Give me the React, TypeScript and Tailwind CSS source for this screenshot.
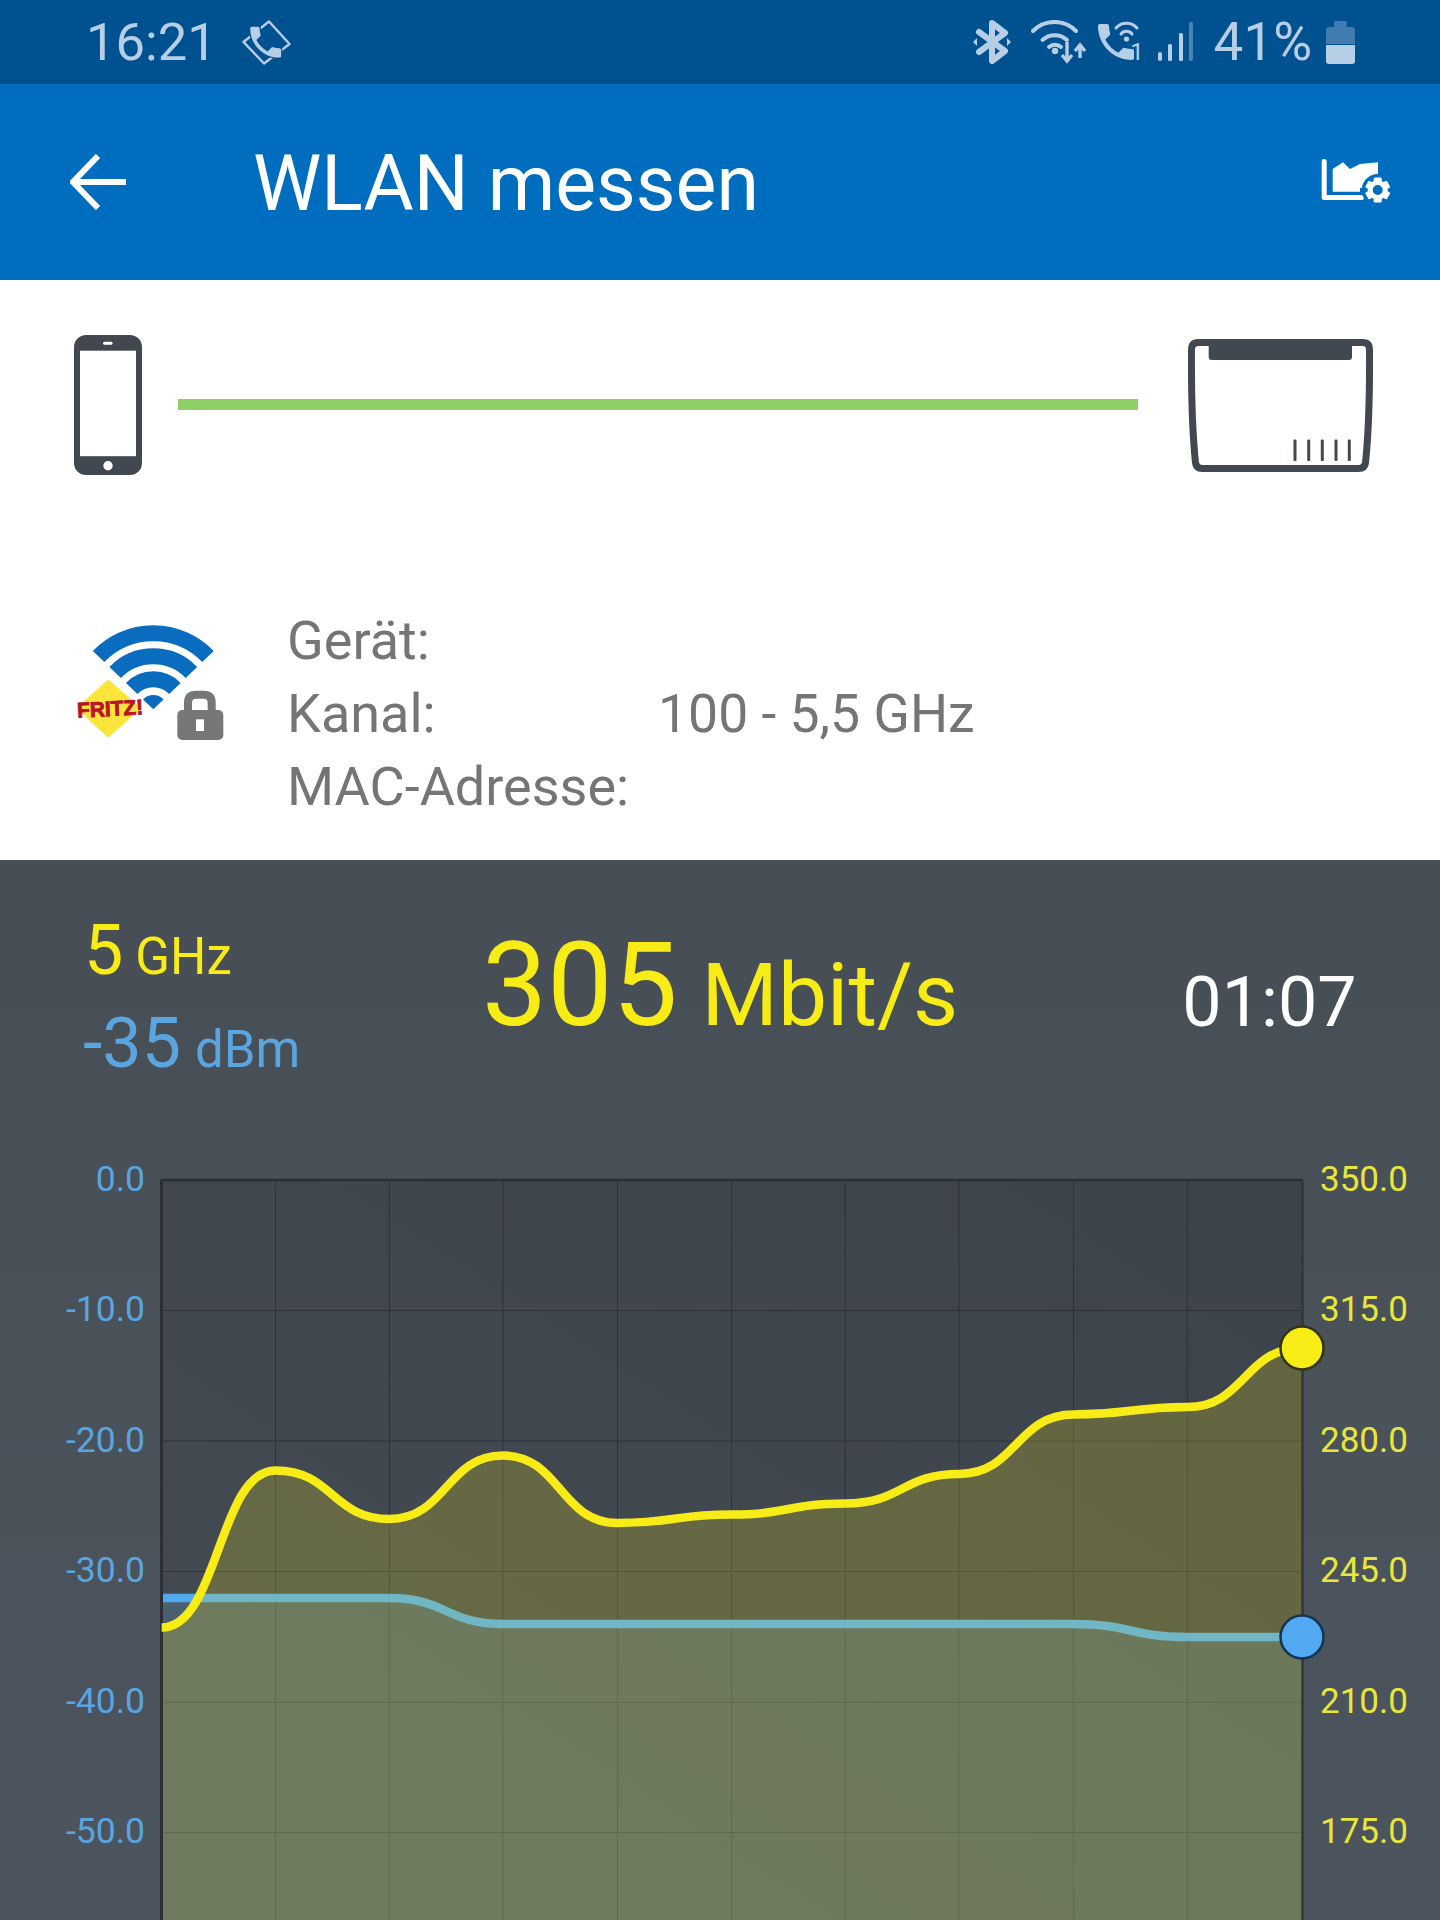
const ROBOTO = { fontFamily: '"Roboto", "Liberation Sans", sans-serif' };

const COLS = [161.6, 275.5, 389.4, 503, 617.5, 731.5, 845.3, 959, 1073.5, 1187.4, 1302];
const ROWS = [1180, 1310.5, 1441, 1571.5, 1702.5, 1832.5];
const YELLOW = [1627.5, 1470.5, 1519, 1455.5, 1523, 1514.5, 1503.5, 1474, 1414.5, 1407, 1348];
const BLUE = [1598, 1598, 1598, 1624, 1624, 1624, 1624, 1624, 1624, 1637, 1637];
const LEFT_LABELS = ['0.0', '-10.0', '-20.0', '-30.0', '-40.0', '-50.0'];
const RIGHT_LABELS = ['350.0', '315.0', '280.0', '245.0', '210.0', '175.0'];

function linePath(values: number[]) {
  let d = `M${COLS[0]} ${values[0]}`;
  for (let i = 1; i < COLS.length; i++) {
    const mid = (COLS[i - 1] + COLS[i]) / 2;
    d += ` C${mid} ${values[i - 1]} ${mid} ${values[i]} ${COLS[i]} ${values[i]}`;
  }
  return d;
}

const HANDSET =
  'M6.62 10.79c1.44 2.83 3.76 5.14 6.59 6.59l2.2-2.2c.27-.27.67-.36 1.02-.24 1.12.37 2.33.57 3.57.57.55 0 1 .45 1 1V20c0 .55-.45 1-1 1-9.39 0-17-7.61-17-17 0-.55.45-1 1-1h3.5c.55 0 1 .45 1 1 0 1.25.2 2.45.57 3.57.11.35.03.74-.25 1.02l-2.2 2.2z';

function CallCardIcon() {
  return (
    <svg width="49" height="45" viewBox="0 0 49 45" className="shrink-0">
      <path d="M27 1.5 L47.5 24 L22 43.5 L1.5 22 Z" fill="none" stroke="#b7cfe6" strokeWidth="2.4" strokeLinejoin="round" />
      <g transform="translate(3 1.5) scale(1.72)">
        <path d={HANDSET} fill="#b7cfe6" stroke="#00518f" strokeWidth="1.5" paintOrder="stroke" />
      </g>
    </svg>
  );
}

function BluetoothIcon() {
  return (
    <svg width="38" height="44" viewBox="0 0 38 44" fill="none" className="shrink-0">
      <path d="M6 12 L32 31 L19 41 V3 L32 13 L6 32" stroke="#b7cfe6" strokeWidth="6" strokeLinejoin="round" strokeLinecap="round" />
      <path d="M0 22 L4 18 V26 Z M38 22 L34 18 V26 Z" fill="#b7cfe6" />
    </svg>
  );
}

function WifiArrowsIcon() {
  return (
    <svg width="56" height="44" viewBox="0 0 56 44" fill="none" className="shrink-0">
      <g stroke="#b7cfe6" strokeWidth="4" strokeLinecap="round">
        <path d="M2 11 A30 30 0 0 1 45 11" />
        <path d="M11.5 20 A18 18 0 0 1 36 20" />
        <path d="M18 27 A9 9 0 0 1 30 27" />
      </g>
      <circle cx="24" cy="31" r="3.2" fill="#b7cfe6" />
      <path d="M36 22 V40 M31 35 L36 41 L41 35" stroke="#b7cfe6" strokeWidth="3.4" />
      <path d="M49 38 V26 M44 31 L49 25 L54 31" stroke="#b7cfe6" strokeWidth="3.4" />
    </svg>
  );
}

function CallWifiIcon() {
  return (
    <svg width="48" height="48" viewBox="0 0 48 48" className="shrink-0">
      <g transform="translate(-5 0) scale(2)">
        <path d={HANDSET} fill="#b7cfe6" />
      </g>
      <rect x="18" y="0" width="30" height="28" fill="#00518f" />
      <g fill="none" stroke="#b7cfe6" strokeWidth="3" strokeLinecap="round">
        <path d="M19 10 A14 14 0 0 1 40 10" />
        <path d="M24 16 A7 7 0 0 1 35 16" />
      </g>
      <circle cx="29.5" cy="21" r="2.6" fill="#b7cfe6" />
      <text x="40" y="42" fontSize="24" fill="#b7cfe6" textAnchor="middle" fontFamily="Roboto, sans-serif">1</text>
    </svg>
  );
}

function SignalIcon() {
  return (
    <svg width="36" height="40" viewBox="0 0 36 40" className="shrink-0">
      <rect x="0" y="30" width="4" height="9" rx="2" fill="#b7cfe6" />
      <rect x="10" y="22" width="4" height="17" rx="1.5" fill="#b7cfe6" />
      <rect x="21" y="11" width="4" height="28" rx="1.5" fill="#b7cfe6" />
      <rect x="31" y="0" width="4" height="39" rx="1.5" fill="#b7cfe6" opacity="0.4" />
    </svg>
  );
}

function BatteryIcon() {
  return (
    <svg width="29" height="43" viewBox="0 0 28 43" preserveAspectRatio="none" className="shrink-0">
      <path d="M9 0 H19 Q20 0 20 1 V6 H25 Q28 6 28 9 V23 H0 V9 Q0 6 3 6 H8 V1 Q8 0 9 0 Z" fill="#417cb0" />
      <path d="M0 24 H28 V40 Q28 43 25 43 H3 Q0 43 0 40 Z" fill="#b7cfe6" />
    </svg>
  );
}

function ChartSettingsIcon() {
  return (
    <svg width="72" height="48" viewBox="0 0 72 48" className="shrink-0">
      <path d="M1.7 3 Q1.7 1 4 1 Q6.7 1 6.7 3 V37 H42 Q44 37 44 39.5 Q44 42 42 42 H4 Q1.7 42 1.7 40 Z" fill="#fff" />
      <path d="M12.7 11 L23 4.3 L30 11 L40 6 L58 4.3 V30 H40 V33.7 H12.7 Z" fill="#fff" />
      <circle cx="57.7" cy="32" r="16" fill="#016dbf" />
      <g fill="#fff">
        {[0, 60, 120, 180, 240, 300].map((a) => (
          <rect key={a} x="53.7" y="19.5" width="8" height="7" rx="1.2" transform={`rotate(${a} 57.7 32)`} />
        ))}
      </g>
      <circle cx="57.7" cy="32" r="7.5" fill="none" stroke="#fff" strokeWidth="5" />
    </svg>
  );
}

function DevicePhone() {
  return (
    <svg width="68" height="140" viewBox="0 0 68 140" className="shrink-0">
      <rect x="0" y="0" width="68" height="140" rx="12" fill="#41484f" />
      <rect x="6" y="15.7" width="56" height="105.5" fill="#fff" />
      <rect x="29" y="6.7" width="9.5" height="3" rx="1.5" fill="#fff" />
      <circle cx="34" cy="130.7" r="4.7" fill="#fff" />
    </svg>
  );
}

function Router() {
  return (
    <svg width="185" height="133" viewBox="0 0 185 133" className="shrink-0">
      <path
        d="M10 3.5 H175 Q181.5 3.5 181.5 11 Q182 80 177.5 124 Q176.5 129.5 171 129.5 H14 Q8.5 129.5 7.5 124 Q3 80 3.5 11 Q3.5 3.5 10 3.5 Z"
        fill="none"
        stroke="#41484f"
        strokeWidth="7"
      />
      <path d="M20.7 0 H164 V18 Q164 21 161 21 H23.7 Q20.7 21 20.7 18 Z" fill="#41484f" />
      <g fill="#41484f">
        <rect x="105.5" y="100.5" width="3" height="21.5" rx="1" />
        <rect x="119.2" y="100.5" width="3" height="21.5" rx="1" />
        <rect x="132.8" y="100.5" width="3" height="21.5" rx="1" />
        <rect x="146.5" y="100.5" width="3" height="21.5" rx="1" />
        <rect x="159.8" y="100.5" width="3" height="21.5" rx="1" />
      </g>
    </svg>
  );
}

function FritzWifi() {
  return (
    <svg width="180" height="145" viewBox="0 0 180 145" className="shrink-0">
      <g fill="none" stroke="#0a6cbf" strokeWidth="16">
        <path d="M48.6 56.5 A76 76 0 0 1 158 56.5" />
        <path d="M65.2 72.5 A53 53 0 0 1 141.4 72.5" />
        <path d="M81.7 88.5 A30 30 0 0 1 124.9 88.5" />
      </g>
      <path d="M103.3 109.3 L93 99.4 A14.3 14.3 0 0 1 113.6 99.4 Z" fill="#0a6cbf" />
      <path d="M58.3 82 L88 108.3 L58.3 135 L29 108.3 Z" fill="#fbe53a" stroke="#fbe53a" strokeWidth="4" strokeLinejoin="round" />
      <text
        x="27"
        y="116"
        fontSize="21"
        fontWeight="900"
        fill="#b81426"
        stroke="#b81426"
        strokeWidth="0.9"
        textLength="66"
        lengthAdjust="spacingAndGlyphs"
        transform="rotate(-3 58 108)"
        fontFamily="'Liberation Sans', sans-serif"
      >
        FRITZ!
      </text>
      <path d="M138 112 V103 Q138 94.7 146 94.7 H153.7 Q161.7 94.7 161.7 103 V112" fill="none" stroke="#777" strokeWidth="8" />
      <rect x="127.3" y="110" width="46" height="30" rx="5" fill="#777" />
      <rect x="146" y="119.3" width="8" height="11.7" fill="#fff" />
    </svg>
  );
}

function Chart() {
  const yellow = linePath(YELLOW);
  const blue = linePath(BLUE);
  const closeArea = ` L${COLS[10]} 1921 L${COLS[0]} 1921 Z`;
  return (
    <svg width="1142" height="740" viewBox="161 1180 1142 740" className="mt-[65px] shrink-0 overflow-visible">
      <defs>
        <linearGradient id="plotBg" x1="0" y1="1" x2="1" y2="0">
          <stop offset="0" stopColor="#454c54" />
          <stop offset="1" stopColor="#3d434a" />
        </linearGradient>
      </defs>
      <rect x="161" y="1180" width="1142" height="741" fill="url(#plotBg)" />
      <g stroke="#2c3238" strokeWidth="1">
        {COLS.slice(1, 10).map((x) => (
          <line key={x} x1={x} y1="1180" x2={x} y2="1921" />
        ))}
        {ROWS.slice(1).map((y) => (
          <line key={y} x1="161" y1={y} x2="1303" y2={y} />
        ))}
      </g>
      <path d={blue + closeArea} fill="#6cb0dc" fillOpacity="0.21" />
      <path d={blue} fill="none" stroke="#4fa9ef" strokeWidth="8.5" />
      <path d={yellow + closeArea} fill="#f8ec17" fillOpacity="0.2" />
      <line x1="161.5" y1="1180" x2="161.5" y2="1921" stroke="#2b3036" strokeWidth="3" />
      <line x1="161" y1="1180" x2="1303" y2="1180" stroke="#2b3036" strokeWidth="2.5" />
      <line x1="1302.5" y1="1180" x2="1302.5" y2="1921" stroke="#31373d" strokeWidth="2.5" />
      <path d={yellow} fill="none" stroke="#f8ec17" strokeWidth="8.5" />
      <circle cx="1302" cy="1348" r="21.5" fill="#f8ec17" stroke="#33330f" strokeWidth="2.5" />
      <circle cx="1302" cy="1637" r="21.5" fill="#52a9f2" stroke="#153452" strokeWidth="2.5" />
    </svg>
  );
}

export default function App() {
  return (
    <div className="flex h-[1920px] w-[1440px] flex-col overflow-hidden bg-white" style={ROBOTO}>
      <div className="flex h-[84px] shrink-0 items-center justify-between bg-[#00518f] pl-[86px] pr-[85px] text-[#b7cfe6]">
        <div className="flex items-center gap-[25px]">
          <span className="text-[52.5px] font-normal leading-none">16:21</span>
          <CallCardIcon />
        </div>
        <div className="flex items-center">
          <BluetoothIcon />
          <div className="ml-[20px]"><WifiArrowsIcon /></div>
          <div className="ml-[10px]"><CallWifiIcon /></div>
          <div className="ml-[13px]"><SignalIcon /></div>
          <span className="ml-[20px] text-[53px] font-normal leading-none">41%</span>
          <div className="ml-[14px]"><BatteryIcon /></div>
        </div>
      </div>

      <div className="flex h-[196px] shrink-0 items-center justify-between bg-[#016dbf] pl-[70px] pr-[48px]">
        <div className="flex items-center">
          <svg width="56" height="56" viewBox="0 0 56 56" fill="none" className="shrink-0">
            <path d="M3 28 H56 M28 2 L3 28 L28 54" stroke="#fff" strokeWidth="6" />
          </svg>
          <h1 className="ml-[127px] mt-[4px] text-[77px] font-normal leading-none text-white">WLAN messen</h1>
        </div>
        <ChartSettingsIcon />
      </div>

      <div className="flex h-[580px] shrink-0 flex-col">
        <div className="flex items-center pl-[74px] pt-[55px]">
          <DevicePhone />
          <div className="mb-[2px] ml-[36px] h-[11px] w-[960px] bg-[#8fcf68]" />
          <div className="ml-[50px]"><Router /></div>
        </div>
        <div className="mt-[130px] flex items-start pl-[50px]">
          <div className="-mt-[5px]"><FritzWifi /></div>
          <div className="-mt-[1px] ml-[57px] text-[54px] leading-[73px] text-[#757575]">
            <div>Gerät:</div>
            <div className="flex">
              <span className="w-[371px]">Kanal:</span>
              <span className="text-[53.5px]">100 - 5,5 GHz</span>
            </div>
            <div>MAC-Adresse:</div>
          </div>
        </div>
      </div>

      <div className="flex min-h-0 flex-1 flex-col bg-gradient-to-b from-[#474e55] to-[#4c555e]">
        <div className="flex h-[255px] shrink-0 items-start">
          <div className="ml-[83px] mt-[50px] w-[300px]">
            <div className="pl-[1px] leading-none text-[#f8ec17]">
              <span className="text-[70px] leading-[80px]">5</span>
              <span className="ml-[12px] text-[51px]">GHz</span>
            </div>
            <div className="mt-[13px] leading-none text-[#5aa5e0]">
              <span className="text-[70px] leading-[80px]">-35</span>
              <span className="ml-[14px] text-[51px]">dBm</span>
            </div>
          </div>
          <div className="ml-[99px] mt-[67px] flex items-baseline leading-none text-[#f8ec17]">
            <span className="text-[116px]">305</span>
            <span className="ml-[24px] text-[87.5px]">Mbit/s</span>
          </div>
          <div className="ml-[224px] mt-[107px] text-[70px] leading-none text-white">01:07</div>
        </div>
        <div className="-mt-[1px] flex min-h-0 flex-1 items-start">
          <div className="w-[161px] shrink-0 pr-[16px] text-right text-[35.5px] text-[#5aa5e0]">
            {LEFT_LABELS.map((t) => (
              <div key={t} className="flex h-[130.5px] items-center justify-end leading-none">{t}</div>
            ))}
          </div>
          <div className="mt-[1px] shrink-0"><Chart /></div>
          <div className="shrink-0 pl-[17px] text-[35px] text-[#e8e63c]">
            {RIGHT_LABELS.map((t) => (
              <div key={t} className="flex h-[130.5px] items-center leading-none">{t}</div>
            ))}
          </div>
        </div>
      </div>
    </div>
  );
}
